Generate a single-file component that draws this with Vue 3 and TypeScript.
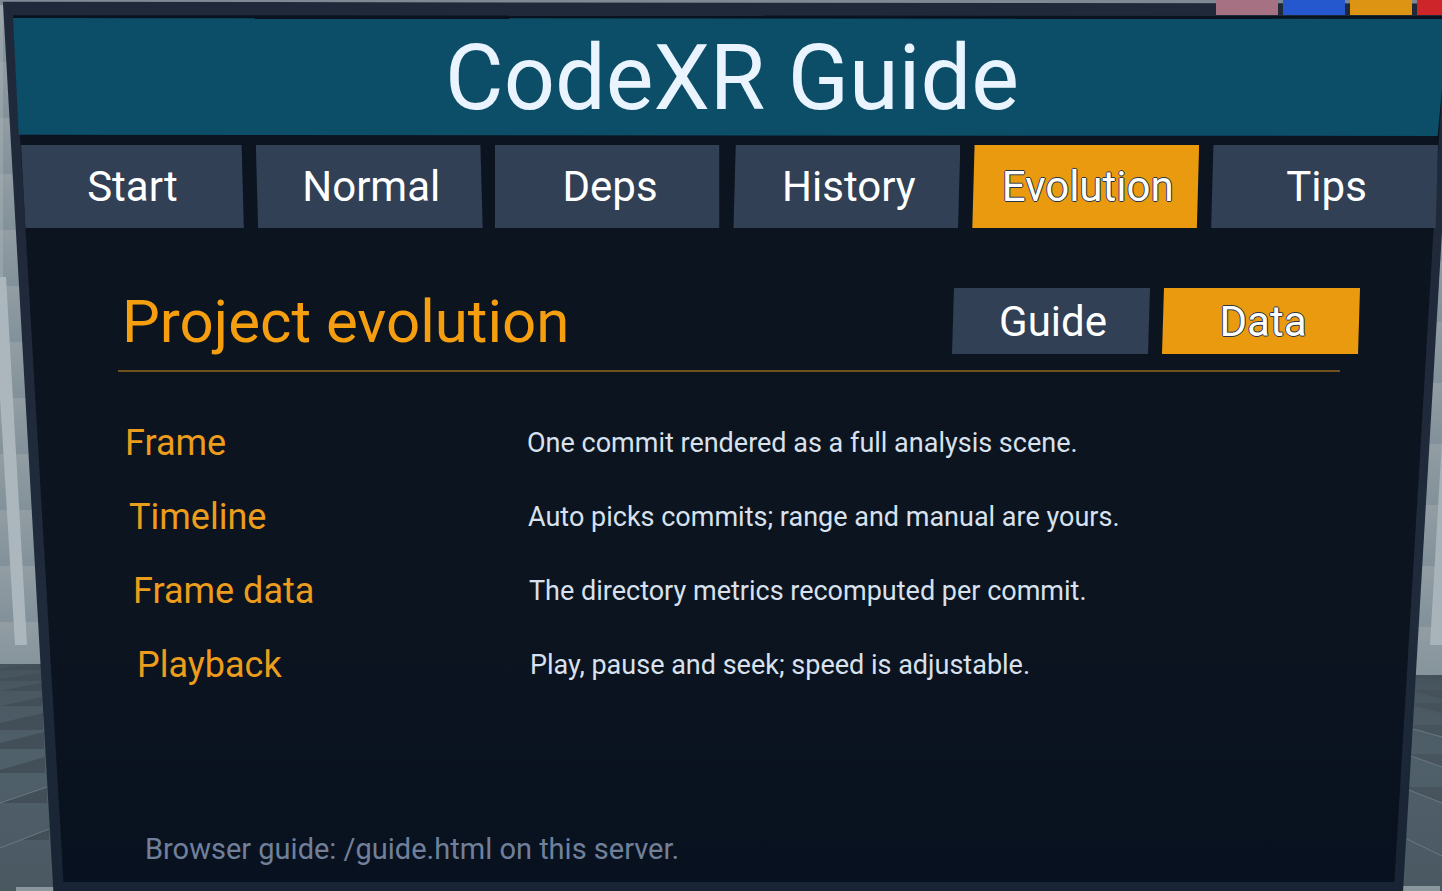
<script setup lang="ts">
import { ref } from 'vue'

interface Entry { term: string; text: string }

const tabs: string[] = ['Start', 'Normal', 'Deps', 'History', 'Evolution', 'Tips']
const activeTab = ref('Evolution')
const views: string[] = ['Guide', 'Data']
const activeView = ref('Data')
const entries: Entry[] = [
  { term: 'Frame', text: 'One commit rendered as a full analysis scene.' },
  { term: 'Timeline', text: 'Auto picks commits; range and manual are yours.' },
  { term: 'Frame data', text: 'The directory metrics recomputed per commit.' },
  { term: 'Playback', text: 'Play, pause and seek; speed is adjustable.' },
]
const handles: string[] = ['rose', 'blue', 'amber', 'red']
</script>

<template>
  <div class="stage">
    <svg class="scene" viewBox="0 0 1442 891" preserveAspectRatio="none" aria-hidden="true">
      <defs>
        <linearGradient id="brickLeft" gradientUnits="userSpaceOnUse" x1="0" y1="6" x2="0" y2="62" spreadMethod="repeat">
          <stop offset="0" stop-color="#929da3" />
          <stop offset="1" stop-color="#82919a" />
        </linearGradient>
        <linearGradient id="brickRight" gradientUnits="userSpaceOnUse" x1="0" y1="17" x2="0" y2="78" spreadMethod="repeat">
          <stop offset="0" stop-color="#929da3" />
          <stop offset="1" stop-color="#82919a" />
        </linearGradient>
        <linearGradient id="floor" x1="0" y1="0" x2="0" y2="1">
          <stop offset="0" stop-color="#46545d" />
          <stop offset="0.4" stop-color="#50606a" />
          <stop offset="1" stop-color="#4a5862" />
        </linearGradient>
      </defs>
      <rect width="721" height="664" fill="url(#brickLeft)" />
      <rect x="721" width="721" height="675" fill="url(#brickRight)" />
      <rect width="1442" height="5" fill="#7d8a95" />
      <rect y="5" width="3" height="272" fill="#a3afb3" fill-opacity="0.5" />
      <path d="M0 277H6L27 645H15L0 397Z" fill="#abb6bd" />
      <path d="M1442 440V645H1430Z" fill="#a8b4ba" />
      <path d="M0 664H721V891H0Z" fill="url(#floor)" />
      <path d="M721 675H1442V891H721Z" fill="url(#floor)" />
      <g fill="#424f58">
        <path d="M0 669L30 664H41V670H0ZM0 679L42 673V681H0ZM0 691L42 683V691ZM0 706L42 697V706ZM0 723L43 713V730H0ZM0 743L44 732V749H0ZM0 770L45 757V773H0ZM0 803L47 787V803ZM22 840L49 829V840Z" />
        <path d="M1442 681L1416 677V675H1442ZM1442 699L1416 692V690H1442ZM1442 713L1415 706V703H1442ZM1442 737L1413 729V725H1442ZM1442 767L1411 756V754H1442ZM1442 803L1409 790V787H1442Z" fill-opacity="0.6" />
      </g>
      <g stroke="#697882" stroke-width="1" fill="none">
        <path d="M0 803L47 787M0 848L49 829M1442 737L1413 729M1442 767L1411 756M1442 803L1409 790M1442 856L1407 839" />
      </g>
      <path d="M16 887H56V891H16ZM1402 886H1440V891H1402Z" fill="#8a979d" />
    </svg>

    <main class="panel">
      <div class="handles">
        <span v-for="h in handles" :key="h" class="handle" :class="h"></span>
      </div>
      <header class="banner"><h1>CodeXR Guide</h1></header>
      <nav class="tabs" aria-label="Guide sections">
        <button v-for="t in tabs" :key="t" type="button" :class="{ active: t === activeTab }" @click="activeTab = t">
          {{ t }}
        </button>
      </nav>
      <section class="content">
        <div class="heading">
          <h2>Project evolution</h2>
          <div class="views">
            <button v-for="v in views" :key="v" type="button" :class="{ active: v === activeView }" @click="activeView = v">
              {{ v }}
            </button>
          </div>
        </div>
        <hr />
        <dl>
          <div v-for="(e, i) in entries" :key="e.term" class="entry" :style="{ '--row': i }">
            <dt>{{ e.term }}</dt>
            <dd>{{ e.text }}</dd>
          </div>
        </dl>
        <footer>Browser guide: /guide.html on this server.</footer>
      </section>
    </main>
  </div>
</template>

<style>
body { margin: 0; background: #0c1420; }
</style>

<style scoped>
* { box-sizing: border-box; }
.stage {
  position: relative;
  min-height: 100vh;
  overflow: hidden;
  display: flex;
  font-family: Roboto, "Liberation Sans", sans-serif;
  color: #fff;
}
.scene { position: absolute; inset: 0; width: 100%; height: 100%; }
/* The panel leans away from the viewer, so its sides converge toward the bottom. */
.panel { position: relative; flex: 1; display: flex; flex-direction: column; isolation: isolate; }
.panel::before,
.panel::after { content: ""; position: absolute; inset: 0; z-index: -1; }
.panel::before {
  background: linear-gradient(#20293a, #1f2a3a 70%, #182334);
  clip-path: polygon(0.2% 0.2%, 100% 0.4%, 100% 26%, 97.3% 100%, 3.7% 100%);
}
.panel::after {
  background: linear-gradient(#09131f, #0c1420 25%, #0c1420 70%, #08111f);
  clip-path: polygon(0.9% 1.7%, 100% 1.8%, 100% 10%, 96.7% 99%, 4.4% 99%);
}
.handles { display: flex; justify-content: flex-end; gap: 5px; height: 18px; padding-bottom: 3px; overflow: hidden; }
.handle { width: 62px; flex: none; }
.handle:last-child { width: 25px; }
.rose { background: #a67283; }
.blue { background: #2558cf; }
.amber { background: #de9413; }
.red { background: #cd2529; }
.banner {
  height: 118px;
  display: flex;
  align-items: center;
  justify-content: center;
  padding: 4px 0 0 22px;
  background: #0c4d68;
  clip-path: polygon(0.9% 0, 100% 0.8%, 100% 60%, 99.7% 100%, 1.3% 99%);
}
h1 { margin: 0; font-size: 90px; line-height: 114px; font-weight: 400; color: #e9f4ff; }
button {
  border: 0;
  padding: 0 0 0 4px;
  background: #314055;
  color: #fff;
  font-family: inherit;
  font-size: 42px;
  cursor: pointer;
}
button.active {
  background: #ea9a0e;
  text-shadow: 1px 0 #273449, -1px 0 #273449, 0 1px #273449, 0 -1px #273449;
}
.tabs { display: flex; gap: 12px; padding: 9px 4px 0 21px; }
.tabs button { flex: 1; height: 83px; }
.tabs button:nth-child(1) { padding: 0; clip-path: polygon(0 0, 99% 0, 100% 100%, 2% 100%); }
.tabs button:nth-child(2) { clip-path: polygon(0 0, 99% 0, 100% 100%, 1% 100%); }
.tabs button:nth-child(3) { clip-path: polygon(0 0, 99% 0, 99% 100%, 0 100%); }
.tabs button:nth-child(n + 4) { clip-path: polygon(1% 0, 100% 0, 99% 100%, 0 100%); }
.content { flex: 1; display: flex; flex-direction: column; padding: 60px 82px 0 118px; }
.heading { display: flex; align-items: center; justify-content: space-between; }
h2 { margin: 0; padding: 2px 0 0 4px; font-size: 60px; line-height: 64px; font-weight: 400; color: #f59f10; }
.views { display: flex; gap: 12px; }
.views button { width: 198px; height: 66px; clip-path: polygon(1% 0, 100% 0, 99% 100%, 0 100%); }
hr { align-self: stretch; margin: 16px 20px 0 0; padding: 0; border: 0; height: 2px; background: #70501d; }
dl { margin: 34px 0 0; }
.entry { display: grid; grid-template-columns: 1fr 833px; align-items: center; height: 74px; }
dt { padding-left: calc(7px + var(--row) * 4px); font-size: 36px; color: #eb9d1b; }
dd { margin: 0; padding-left: calc(var(--row) * 1px); font-size: 27px; color: #d8e1ee; }
footer { margin-top: auto; padding: 0 0 22px 27px; font-size: 29px; line-height: 40px; color: #71809a; }
</style>
